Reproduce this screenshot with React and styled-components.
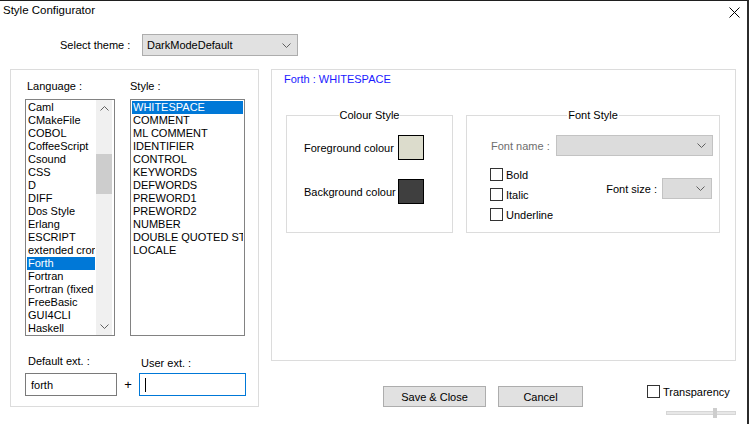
import React from "react";
import styled, { createGlobalStyle } from "styled-components";

const GlobalStyle = createGlobalStyle`
  html, body { margin: 0; padding: 0; background: #fff; }
  body {
    font-family: "Liberation Sans", Arial, sans-serif;
    font-size: 11px;
    color: #000;
  }
  * { box-sizing: border-box; }
`;

const languages = [
  "Caml", "CMakeFile", "COBOL", "CoffeeScript", "Csound", "CSS", "D", "DIFF",
  "Dos Style", "Erlang", "ESCRIPT", "extended crontab", "Forth", "Fortran",
  "Fortran (fixed form)", "FreeBasic", "GUI4CLI", "Haskell",
];

const styles = [
  "WHITESPACE", "COMMENT", "ML COMMENT", "IDENTIFIER", "CONTROL", "KEYWORDS",
  "DEFWORDS", "PREWORD1", "PREWORD2", "NUMBER", "DOUBLE QUOTED STRING", "LOCALE",
];

const Window = styled.div`
  width: 749px;
  height: 424px;
  background: #fff;
  border-top: 1px solid #1f1f1f;
  border-right: 2px solid #2b2b2b;
  overflow: hidden;
`;

const TitleBar = styled.div`
  height: 24px;
  display: flex;
  justify-content: space-between;
  align-items: flex-start;
  padding: 2px 7px 0 3px;
`;

const Title = styled.div`
  line-height: 14px;
  font-size: 11.5px;
`;

const CloseIcon = styled.svg`
  margin-top: 4px;
`;

const ThemeRow = styled.div`
  margin-top: 9px;
  padding-left: 60px;
  display: flex;
  align-items: center;
  height: 22px;
`;

const ThemeLabel = styled.span`
  width: 82px;
`;

const Select = styled.div`
  width: ${(p) => p.$w}px;
  height: ${(p) => p.$h || 21}px;
  display: flex;
  align-items: center;
  justify-content: space-between;
  padding: 0 6px 0 4px;
  background: ${(p) => (p.$disabled ? "#dcdcdc" : "#e1e1e1")};
  border: 1px solid ${(p) => (p.$disabled ? "#c3c3c3" : "#adadad")};
`;

const Body = styled.div`
  margin-top: 13px;
  padding-left: 10px;
  display: grid;
  grid-template-columns: 249px 465px;
  column-gap: 12px;
  align-items: start;
`;

const LeftBox = styled.div`
  height: 338px;
  border: 1px solid #dcdcdc;
  padding: 9px 0 0 14px;
`;

const ListsRow = styled.div`
  display: flex;
  gap: 15px;
`;

const Column = styled.div`
  display: flex;
  flex-direction: column;
`;

const ColLabel = styled.div`
  line-height: 14px;
  margin-bottom: 6px;
  padding-left: ${(p) => p.$indent || 0}px;
`;

const ListBox = styled.div`
  width: ${(p) => p.$w}px;
  height: 237px;
  border: 1px solid #828282;
  display: flex;
  overflow: hidden;
`;

const Items = styled.div`
  flex: 1;
  min-width: 0;
  padding: 1px;
`;

const Item = styled.div`
  height: 13px;
  line-height: 13px;
  padding-left: 1px;
  white-space: nowrap;
  overflow: hidden;
  background: ${(p) => (p.$selected ? "#0078d7" : "transparent")};
  color: ${(p) => (p.$selected ? "#fff" : "#000")};
`;

const ScrollBar = styled.div`
  width: 16px;
  margin-right: 2px;
  background: #f0f0f0;
  display: flex;
  flex-direction: column;
  align-items: stretch;
`;

const ScrollArrow = styled.div`
  height: 17px;
  display: flex;
  align-items: center;
  justify-content: center;
`;

const ScrollTrack = styled.div`
  flex: 1;
`;

const Thumb = styled.div`
  margin-top: 37px;
  height: 40px;
  background: #cdcdcd;
`;

const ExtGrid = styled.div`
  margin-top: 18px;
  display: grid;
  grid-template-columns: 92px 22px 107px;
  grid-template-rows: 14px 23px;
  row-gap: 5px;
  line-height: 14px;
`;

const ExtLabel = styled.div`
  grid-column: ${(p) => p.$col};
  padding-left: ${(p) => p.$indent}px;
  margin-top: ${(p) => p.$drop || 0}px;
`;

const TextInput = styled.div`
  height: 23px;
  border: 1px solid ${(p) => (p.$focused ? "#0078d7" : "#7a7a7a")};
  padding-left: 5px;
  line-height: 20px;
  display: flex;
  align-items: center;
`;

const Caret = styled.span`
  width: 1px;
  height: 14px;
  background: #000;
`;

const Plus = styled.div`
  display: flex;
  align-items: center;
  justify-content: center;
  font-size: 13px;
  padding-top: 1px;
`;

const RightCol = styled.div`
  display: flex;
  flex-direction: column;
`;

const Panel = styled.div`
  height: 292px;
  border: 1px solid #dcdcdc;
  padding: 2px 0 0 12px;
`;

const PanelTitle = styled.div`
  line-height: 14px;
  color: #1a1aff;
`;

const GroupRow = styled.div`
  margin-top: 22px;
  margin-left: 2px;
  display: flex;
  gap: 13px;
`;

const Group = styled.fieldset`
  width: ${(p) => p.$w}px;
  height: 125px;
  margin: 0;
  padding: 0;
  min-width: 0;
  border: 1px solid #dcdcdc;
`;

const Legend = styled.legend`
  margin: 0 auto;
  padding: 0 1px;
  line-height: 14px;
`;

const ColourGrid = styled.div`
  margin-top: 13px;
  padding-left: 17px;
  display: grid;
  grid-template-columns: 94px 26px;
  grid-auto-rows: 25px;
  row-gap: 19px;
  align-items: center;
`;

const Swatch = styled.div`
  width: 26px;
  height: 25px;
  border: 1px solid #000;
  background: ${(p) => p.$color};
`;

const FontBody = styled.div`
  padding: 13px 6px 0 23px;
`;

const FontNameRow = styled.div`
  display: flex;
  align-items: center;
`;

const MutedLabel = styled.span`
  width: 66px;
  padding-left: 1px;
  color: #6d6d6d;
`;

const LowerRow = styled.div`
  margin-top: 12px;
  display: flex;
  align-items: flex-start;
`;

const CheckCol = styled.div`
  display: flex;
  flex-direction: column;
  gap: 7px;
`;

const CheckRow = styled.label`
  display: flex;
  align-items: center;
  gap: 3px;
  height: 13px;
`;

const Box = styled.span`
  width: 13px;
  height: 13px;
  border: 1px solid #333;
  background: #fff;
`;

const SizeRow = styled.div`
  margin-left: auto;
  margin-right: 1px;
  margin-top: 10px;
  display: flex;
  align-items: center;
  gap: 5px;
`;

const Footer = styled.div`
  margin-top: 24px;
  padding-left: 112px;
  display: flex;
  align-items: flex-start;
`;

const Button = styled.div`
  width: ${(p) => p.$w}px;
  height: 21px;
  margin-top: 1px;
  margin-left: ${(p) => p.$ml || 0}px;
  background: #e1e1e1;
  border: 1px solid #adadad;
  display: flex;
  align-items: center;
  justify-content: center;
`;

const TransBlock = styled.div`
  margin-left: 64px;
  display: flex;
  flex-direction: column;
`;

const Slider = styled.div`
  position: relative;
  margin: 10px 0 0 19px;
  width: 70px;
  height: 10px;
  display: flex;
  align-items: center;
`;

const Track = styled.div`
  width: 100%;
  height: 4px;
  background: #e7e7e7;
  border: 1px solid #d6d6d6;
`;

const SliderThumb = styled.div`
  position: absolute;
  top: 0;
  width: 4px;
  height: 10px;
  background: #cdcdcd;
`;

const Chevron = ({ up = false }) => (
  <svg width="9" height="5" viewBox="0 0 9 5">
    <polyline
      points={up ? "0.5,4.5 4.5,0.5 8.5,4.5" : "0.5,0.5 4.5,4.5 8.5,0.5"}
      fill="none"
      stroke="#606060"
      strokeWidth="1"
    />
  </svg>
);

const Dropdown = ({ w, h, disabled, children }) => (
  <Select $w={w} $h={h} $disabled={disabled}>
    <span>{children}</span>
    <Chevron />
  </Select>
);

const Check = ({ children }) => (
  <CheckRow>
    <Box />
    <span>{children}</span>
  </CheckRow>
);

export default function App() {
  const sliderValue = 0.67;
  return (
    <>
      <GlobalStyle />
      <Window>
        <TitleBar>
          <Title>Style Configurator</Title>
          <CloseIcon width="11" height="11" viewBox="0 0 11 11">
            <path d="M0.5 0.5 L10.5 10.5 M10.5 0.5 L0.5 10.5" stroke="#000" strokeWidth="1" />
          </CloseIcon>
        </TitleBar>

        <ThemeRow>
          <ThemeLabel>Select theme :</ThemeLabel>
          <Dropdown w={156} h={22}>DarkModeDefault</Dropdown>
        </ThemeRow>

        <Body>
          <LeftBox>
            <ListsRow>
              <Column>
                <ColLabel $indent={2}>Language :</ColLabel>
                <ListBox $w={90}>
                  <Items>
                    {languages.map((l) => (
                      <Item key={l} $selected={l === "Forth"}>{l}</Item>
                    ))}
                  </Items>
                  <ScrollBar>
                    <ScrollArrow><Chevron up /></ScrollArrow>
                    <ScrollTrack><Thumb /></ScrollTrack>
                    <ScrollArrow><Chevron /></ScrollArrow>
                  </ScrollBar>
                </ListBox>
              </Column>
              <Column>
                <ColLabel>Style :</ColLabel>
                <ListBox $w={115}>
                  <Items>
                    {styles.map((s) => (
                      <Item key={s} $selected={s === "WHITESPACE"}>{s}</Item>
                    ))}
                  </Items>
                </ListBox>
              </Column>
            </ListsRow>

            <ExtGrid>
              <ExtLabel $col={1} $indent={3}>Default ext. :</ExtLabel>
              <ExtLabel $col={3} $indent={2} $drop={2}>User ext. :</ExtLabel>
              <TextInput>forth</TextInput>
              <Plus>+</Plus>
              <TextInput $focused><Caret /></TextInput>
            </ExtGrid>
          </LeftBox>

          <RightCol>
            <Panel>
              <PanelTitle>Forth : WHITESPACE</PanelTitle>
              <GroupRow>
                <Group $w={167}>
                  <Legend>Colour Style</Legend>
                  <ColourGrid>
                    <span>Foreground colour</span>
                    <Swatch $color="#dcdccc" />
                    <span>Background colour</span>
                    <Swatch $color="#3f3f3f" />
                  </ColourGrid>
                </Group>
                <Group $w={254}>
                  <Legend>Font Style</Legend>
                  <FontBody>
                    <FontNameRow>
                      <MutedLabel>Font name :</MutedLabel>
                      <Dropdown w={157} disabled />
                    </FontNameRow>
                    <LowerRow>
                      <CheckCol>
                        <Check>Bold</Check>
                        <Check>Italic</Check>
                        <Check>Underline</Check>
                      </CheckCol>
                      <SizeRow>
                        <span>Font size :</span>
                        <Dropdown w={50} disabled />
                      </SizeRow>
                    </LowerRow>
                  </FontBody>
                </Group>
              </GroupRow>
            </Panel>

            <Footer>
              <Button $w={103}>Save &amp; Close</Button>
              <Button $w={85} $ml={12}>Cancel</Button>
              <TransBlock>
                <Check>Transparency</Check>
                <Slider>
                  <Track />
                  <SliderThumb style={{ left: `${Math.round(sliderValue * 70)}px` }} />
                </Slider>
              </TransBlock>
            </Footer>
          </RightCol>
        </Body>
      </Window>
    </>
  );
}
